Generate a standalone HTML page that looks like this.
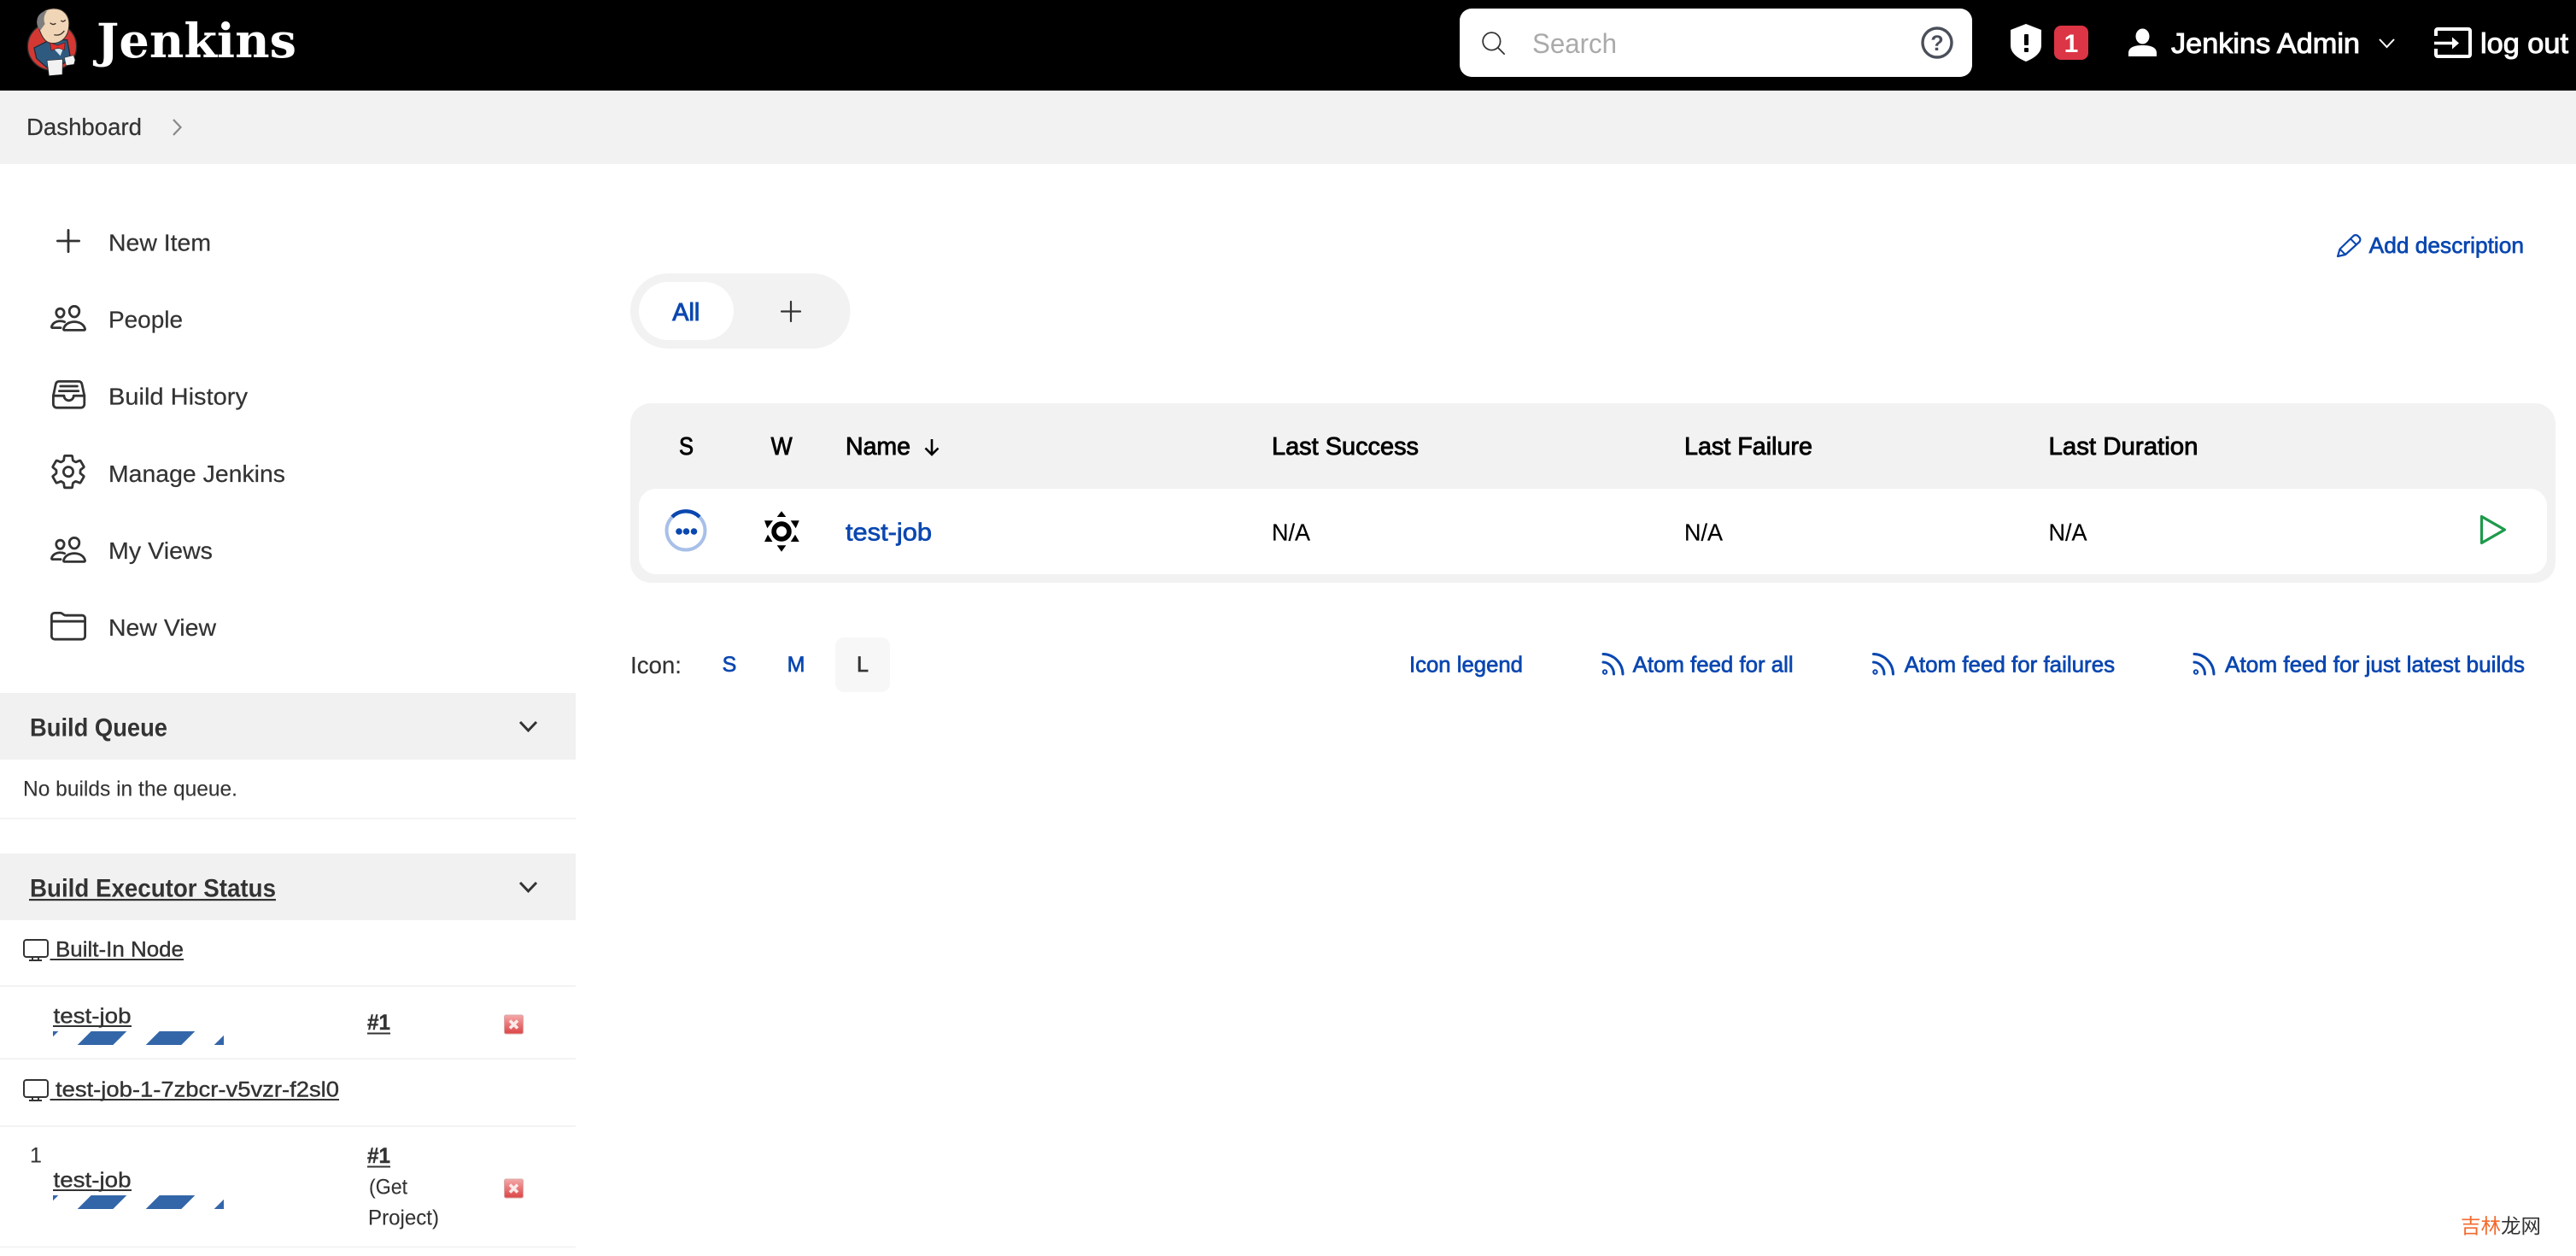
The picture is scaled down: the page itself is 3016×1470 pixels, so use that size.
<!DOCTYPE html>
<html lang="en">
<head>
<meta charset="utf-8">
<title>Dashboard [Jenkins]</title>
<style>
html,body{margin:0;padding:0;background:#fff;width:3016px;height:1470px;overflow:hidden}
svg{display:block}
text{font-family:"Liberation Sans",sans-serif;white-space:pre}
.sb{font-size:28px;fill:#333;stroke:#333;stroke-width:.2px}
.sm{font-size:25px;fill:#333;stroke:#333;stroke-width:.1px}
.smm{font-size:25px;fill:#333;stroke:#333;stroke-width:.4px}
.hd{font-size:29px;fill:#000;stroke:#000;stroke-width:.9px}
.td{font-size:28px;fill:#000;stroke:#000;stroke-width:.2px}
.lk{fill:#0a47b0;stroke:#0a47b0;stroke-width:.7px;font-size:26px}
.ion{fill:none;stroke:#333;stroke-width:32;stroke-linecap:round;stroke-linejoin:round}
.ul{stroke:#333;stroke-width:2}
.sep{fill:#f3f3f3}
</style>
</head>
<body>
<svg xmlns="http://www.w3.org/2000/svg" width="3016" height="1470" viewBox="0 0 3016 1470">
<defs>
<linearGradient id="stopg" x1="0" y1="0" x2="0" y2="1"><stop offset="0" stop-color="#f4a8a8"/><stop offset="1" stop-color="#dc4446"/></linearGradient>
<clipPath id="barclip"><rect x="62" y="0" width="200" height="16"/></clipPath>
<g id="bar" clip-path="url(#barclip)" fill="#3366a8">
<polygon points="26.7,0 68.3,0 52.3,16 10.7,16"/>
<polygon points="106.7,0 148.3,0 132.3,16 90.7,16"/>
<polygon points="186.7,0 228.3,0 212.3,16 170.7,16"/>
<polygon points="266.7,0 308.3,0 292.3,16 250.7,16"/>
</g>
<g id="stop">
<rect x="0.5" y="0.5" width="22" height="22" rx="2" fill="url(#stopg)" stroke="#dba8a8"/>
<path d="M7 7L16 16M16 7L7 16" stroke="#fbeaea" stroke-width="3.6"/>
</g>
<g id="mon" fill="none" stroke="#333" stroke-width="2">
<rect x="28" y="1" width="28" height="20" rx="3"/>
<path d="M38 21v3M45 21v3M34 25h15"/>
</g>
<g id="rss" fill="none" stroke="#0a47b0" stroke-width="3" stroke-linecap="round">
<circle cx="3.5" cy="22.5" r="2.2" stroke-width="2"/>
<path d="M1.5 11A13 14 0 0 1 14 25"/>
<path d="M1.5 1.5A23.5 24 0 0 1 24.5 25"/>
</g>
<g id="people">
<path class="ion" d="M402 168c-2.93 40.67-33.1 72-66 72s-63.12-31.32-66-72c-3-42.31 26.37-72 66-72s69 30.46 66 72z"/>
<path class="ion" d="M336 304c-65.17 0-127.84 32.37-143.54 95.41-2.08 8.34 3.15 16.59 11.72 16.59h263.65c8.57 0 13.77-8.25 11.72-16.59C463.85 335.36 401.18 304 336 304z"/>
<path class="ion" d="M200 185.94c-2.34 32.48-26.72 58.06-53 58.06s-50.7-25.57-53-58.06C91.61 152.15 115.34 128 147 128s55.39 24.77 53 57.94z"/>
<path class="ion" d="M206 306c-18.05-8.27-37.93-11.45-59-11.45-52 0-102.1 25.85-114.65 76.2-1.65 6.66 2.53 13.25 9.37 13.25H154"/>
</g>
</defs>

<!-- header -->
<rect width="3016" height="106" fill="#000"/>
<g transform="scale(.3333)">
<ellipse cx="183" cy="163" rx="86" ry="84" fill="#d33833" stroke="#2a2a2a" stroke-width="4"/>
<path d="M120 168L176 140H236L246 195L225 222L170 242L128 205Z" fill="#2f5a80" stroke="#1f2d3a" stroke-width="4"/>
<path d="M134 92C124 62 148 32 186 30C224 28 246 56 242 92C240 128 218 152 184 152C156 152 144 122 134 92Z" fill="#f0d6b7" stroke="#3a3028" stroke-width="3"/>
<path d="M130 72C132 52 146 42 166 38C154 52 152 70 158 84L142 106C132 98 128 84 130 72Z" fill="#7f7f7f"/>
<path d="M176 80Q186 90 196 82M214 72Q222 80 230 70M190 122Q212 128 226 108" fill="none" stroke="#3a3028" stroke-width="4"/>
<path d="M190 172L212 196L222 170Z" fill="#d8e6ee"/>
<path d="M176 150L202 160L228 150L226 176L203 168L180 178Z" fill="#e0302c" stroke="#5a1a18" stroke-width="2"/>
<path d="M165 212L220 208L219 262L172 266Z" fill="#f2f2f2" stroke="#222" stroke-width="2"/>
<path d="M226 202L258 194L264 210L260 226L232 230Z" fill="#f2f2f2" stroke="#333" stroke-width="2"/>
</g>
<text x="113" y="67" font-size="55" font-weight="700" fill="#fff" textLength="234" lengthAdjust="spacingAndGlyphs" style="font-family:'DejaVu Serif',serif">Jenkins</text>

<rect x="1709" y="10" width="600" height="80" rx="14" fill="#fff"/>
<g transform="translate(1732 34) scale(.065)" fill="none" stroke="#333" stroke-width="27" stroke-linecap="round" stroke-miterlimit="10">
<path d="M221.09 64a157.09 157.09 0 10157.09 157.09A157.1 157.1 0 00221.09 64z"/><path d="M338.29 338.29L448 448"/>
</g>
<text x="1794" y="62" font-size="32" fill="#aaa" textLength="99" lengthAdjust="spacingAndGlyphs">Search</text>
<circle cx="2268" cy="50" r="17" fill="none" stroke="#4a4f5a" stroke-width="3.4"/>
<text x="2268" y="59" font-size="25" font-weight="700" fill="#4a4f5a" text-anchor="middle">?</text>

<path d="M2372 28L2390 35V53C2390 62 2382 68 2372 72C2362 68 2354 62 2354 53V35Z" fill="#fff"/>
<rect x="2370" y="40" width="5" height="13" rx="1" fill="#000"/>
<rect x="2370" y="56" width="5" height="5" rx="1" fill="#000"/>
<rect x="2405" y="30" width="40" height="40" rx="8" fill="#dc3545"/>
<text x="2425" y="61" font-size="30" font-weight="700" fill="#fff" text-anchor="middle">1</text>

<ellipse cx="2508.5" cy="42.5" rx="8" ry="9" fill="#fff"/>
<path d="M2492 66V62C2492 55 2500 53 2508.5 53S2525 55 2525 62V66Z" fill="#fff"/>
<text x="2542" y="62" font-size="33" fill="#fff" stroke="#fff" stroke-width="1" textLength="221" lengthAdjust="spacingAndGlyphs">Jenkins Admin</text>
<path d="M2786 46L2794.5 55L2803 46" fill="none" stroke="#fff" stroke-width="2"/>
<path d="M2852 42V36A2 2 0 0 1 2854 34H2890A2 2 0 0 1 2892 36V64A2 2 0 0 1 2890 66H2854A2 2 0 0 1 2852 64V57" fill="none" stroke="#fff" stroke-width="4"/>
<path d="M2850 50.500H2873" fill="none" stroke="#fff" stroke-width="3.5"/>
<path d="M2871 43.500L2879 50.500L2871 57.500Z" fill="#fff"/>
<text x="2904" y="62" font-size="33" fill="#fff" stroke="#fff" stroke-width="1" textLength="103" lengthAdjust="spacingAndGlyphs">log out</text>

<!-- breadcrumb -->
<rect y="106" width="3016" height="86" fill="#f2f2f2"/>
<text x="31" y="158" class="sb" textLength="135" lengthAdjust="spacingAndGlyphs">Dashboard</text>
<path d="M203 140L211.500 149L203 158" fill="none" stroke="#888" stroke-width="2.200"/>

<!-- side tasks -->
<g transform="translate(57.6 259.6) scale(.0875)"><path class="ion" d="M256 112v288M400 256H112"/></g>
<text x="127" y="293.5" class="sb" textLength="120" lengthAdjust="spacingAndGlyphs">New Item</text>
<use href="#people" transform="translate(57.6 350) scale(.0875)"/>
<text x="127" y="383.5" class="sb" textLength="87" lengthAdjust="spacingAndGlyphs">People</text>
<g transform="translate(58.2 439.4) scale(.0875)"><path class="ion" d="M384 80H128c-26 0-43 14-48 40L48 272v112a48.14 48.14 0 0048 48h320a48.14 48.14 0 0048-48V272l-32-152c-5-27-23-40-48-40z"/><path class="ion" d="M48 272h144M320 272h144M192 272a64 64 0 00128 0M144 144h224M128 208h256"/></g>
<text x="127" y="473.5" class="sb" textLength="163" lengthAdjust="spacingAndGlyphs">Build History</text>
<g transform="translate(57.6 529.7) scale(.0875)"><path class="ion" d="M262.29 192.31a64 64 0 1057.4 57.4 64.13 64.13 0 00-57.4-57.4zM416.39 256a154.34 154.34 0 01-1.53 20.79l45.21 35.46a10.81 10.81 0 012.45 13.75l-42.77 74a10.81 10.81 0 01-13.14 4.59l-44.9-18.08a16.11 16.11 0 00-15.17 1.75A164.48 164.48 0 01325 400.8a15.94 15.94 0 00-8.82 12.14l-6.73 47.89a11.08 11.08 0 01-10.68 9.17h-85.54a11.11 11.11 0 01-10.69-8.87l-6.72-47.82a16.07 16.07 0 00-9-12.22 155.3 155.3 0 01-21.46-12.57 16 16 0 00-15.11-1.71l-44.89 18.07a10.81 10.81 0 01-13.14-4.58l-42.77-74a10.8 10.8 0 012.45-13.75l38.21-30a16.05 16.05 0 006-14.08c-.36-4.17-.58-8.33-.58-12.5s.21-8.27.58-12.35a16 16 0 00-6.07-13.94l-38.19-30A10.81 10.81 0 0149.48 186l42.77-74a10.81 10.81 0 0113.14-4.59l44.9 18.08a16.11 16.11 0 0015.17-1.75A164.48 164.48 0 01187 111.2a15.94 15.94 0 008.82-12.14l6.73-47.89A11.08 11.08 0 01213.23 42h85.54a11.11 11.11 0 0110.69 8.87l6.72 47.82a16.07 16.07 0 009 12.22 155.3 155.3 0 0121.46 12.57 16 16 0 0015.11 1.71l44.89-18.07a10.81 10.81 0 0113.14 4.58l42.77 74a10.8 10.8 0 01-2.45 13.75l-38.21 30a16.05 16.05 0 00-6.07 14.08c.33 4.14.55 8.3.55 12.47z"/></g>
<text x="127" y="564" class="sb" textLength="207" lengthAdjust="spacingAndGlyphs">Manage Jenkins</text>
<use href="#people" transform="translate(57.6 621) scale(.0875)"/>
<text x="127" y="654" class="sb" textLength="122" lengthAdjust="spacingAndGlyphs">My Views</text>
<g transform="translate(57.6 710.4) scale(.0875)"><path class="ion" d="M440 432H72a40 40 0 01-40-40V120a40 40 0 0140-40h75.89a40 40 0 0122.19 6.72l27.84 18.56a40 40 0 0022.19 6.72H440a40 40 0 0140 40v240a40 40 0 01-40 40z"/><path class="ion" d="M32 192h448"/></g>
<text x="127" y="744" class="sb" textLength="126" lengthAdjust="spacingAndGlyphs">New View</text>

<!-- build queue -->
<rect y="811" width="674" height="78" fill="#f1f1f1"/>
<text x="35" y="861.500" font-size="29.5" font-weight="700" fill="#333" textLength="161" lengthAdjust="spacingAndGlyphs">Build Queue</text>
<path d="M609 845L618.500 855L628 845" fill="none" stroke="#333" stroke-width="3"/>
<text x="27" y="931.500" class="sm" textLength="251" lengthAdjust="spacingAndGlyphs">No builds in the queue.</text>
<rect y="957" width="674" height="2" class="sep"/>

<!-- executors -->
<rect y="999" width="674" height="78" fill="#f1f1f1"/>
<text x="35" y="1049.500" font-size="29.5" font-weight="700" fill="#333" textLength="288" lengthAdjust="spacingAndGlyphs">Build Executor Status</text>
<rect x="34" y="1052" width="289" height="2.200" fill="#333"/>
<path d="M609 1033L618.500 1043L628 1033" fill="none" stroke="#333" stroke-width="3"/>

<use href="#mon" transform="translate(0 1099)"/>
<text x="65" y="1119.500" class="smm" textLength="150" lengthAdjust="spacingAndGlyphs">Built-In Node</text>
<path d="M58.500 1123H215" class="ul"/>
<rect y="1153" width="674" height="2" class="sep"/>

<text x="62.500" y="1197.500" class="smm" textLength="91" lengthAdjust="spacingAndGlyphs">test-job</text>
<path d="M62 1201H154" class="ul"/>
<use href="#bar" transform="translate(0 1207)"/>
<text x="430" y="1205" class="smm" font-weight="700" textLength="27" lengthAdjust="spacingAndGlyphs">#1</text>
<path d="M430 1209.500H457" class="ul"/>
<use href="#stop" transform="translate(590 1187.500)"/>
<rect y="1238" width="674" height="2" class="sep"/>

<use href="#mon" transform="translate(0 1263)"/>
<text x="65" y="1283.500" class="smm" textLength="332" lengthAdjust="spacingAndGlyphs">test-job-1-7zbcr-v5vzr-f2sl0</text>
<path d="M58.500 1287H397" class="ul"/>
<rect y="1317" width="674" height="2" class="sep"/>

<text x="35" y="1360.500" font-size="25" fill="#333" stroke="#333" stroke-width=".1">1</text>
<text x="62.500" y="1389.500" class="smm" textLength="91" lengthAdjust="spacingAndGlyphs">test-job</text>
<path d="M62 1393H154" class="ul"/>
<use href="#bar" transform="translate(0 1399)"/>
<text x="430" y="1361" class="smm" font-weight="700" textLength="27" lengthAdjust="spacingAndGlyphs">#1</text>
<path d="M430 1365.500H457" class="ul"/>
<text x="432" y="1397.500" class="sm" textLength="45" lengthAdjust="spacingAndGlyphs">(Get</text>
<text x="431" y="1433.500" class="sm" textLength="83" lengthAdjust="spacingAndGlyphs">Project)</text>
<use href="#stop" transform="translate(590 1379.500)"/>
<rect y="1458.500" width="674" height="2" class="sep"/>

<!-- add description -->
<path d="M2737 300L2739.500 291.500L2755 276.500A4 4 0 0 1 2761 276.500L2762 277.500A4 4 0 0 1 2762 283.500L2746 298Z" fill="none" stroke="#0a47b0" stroke-width="2.200" stroke-linejoin="round"/>
<path d="M2752 279.500L2759 286.500M2739.500 291.500L2746 298" fill="none" stroke="#0a47b0" stroke-width="2"/>
<text x="2773.700" y="296" class="lk" textLength="181.300" lengthAdjust="spacingAndGlyphs">Add description</text>

<!-- tabs -->
<rect x="738" y="320" width="257.500" height="88" rx="44" fill="#f2f2f2"/>
<rect x="748" y="330" width="111" height="68" rx="34" fill="#fff"/>
<text x="787.300" y="375" font-size="29" fill="#0a47b0" stroke="#0a47b0" stroke-width="1" textLength="32" lengthAdjust="spacingAndGlyphs">All</text>
<path d="M926 353V376M915 364.500H937" fill="none" stroke="#333" stroke-width="2.200" stroke-linecap="round"/>

<!-- table -->
<rect x="738" y="472" width="2254" height="210" rx="24" fill="#f2f2f2"/>
<rect x="748" y="572" width="2234" height="100" rx="20" fill="#fff"/>
<text x="795" y="532" class="hd" textLength="17" lengthAdjust="spacingAndGlyphs">S</text>
<text x="902.600" y="532" class="hd" textLength="25" lengthAdjust="spacingAndGlyphs">W</text>
<text x="990" y="532" class="hd" textLength="76" lengthAdjust="spacingAndGlyphs">Name</text>
<path d="M1091 514V532M1083.500 524.500L1091 532L1098.500 524.500" fill="none" stroke="#000" stroke-width="2.600"/>
<text x="1489" y="532" class="hd" textLength="172" lengthAdjust="spacingAndGlyphs">Last Success</text>
<text x="1972" y="532" class="hd" textLength="150" lengthAdjust="spacingAndGlyphs">Last Failure</text>
<text x="2398.500" y="532" class="hd" textLength="175" lengthAdjust="spacingAndGlyphs">Last Duration</text>

<circle cx="803" cy="621" r="22.500" fill="none" stroke="#a8c0e8" stroke-width="4"/>
<path d="M787 605A22.500 22.500 0 0 1 819 605" fill="none" stroke="#0a47b0" stroke-width="4.400"/>
<circle cx="795" cy="622" r="3.800" fill="#0a47b0"/><circle cx="803.500" cy="622" r="3.800" fill="#0a47b0"/><circle cx="812.500" cy="622" r="3.800" fill="#0a47b0"/>

<circle cx="915" cy="622" r="8.900" fill="none" stroke="#000" stroke-width="5.700"/>
<g fill="#000">
<path d="M915 598.300L920.300 605H909.700Z"/>
<path d="M915 645.700L920.300 638.300H909.700Z"/>
<path d="M895 609.300H905L898.300 618.300Z"/>
<path d="M935.700 609.300H925.700L931.700 618.300Z"/>
<path d="M895 634H904.500L899 625.700Z"/>
<path d="M935.700 634H925.700L931 625.700Z"/>
</g>

<text x="990" y="632.500" class="lk" style="font-size:28.500px" textLength="101" lengthAdjust="spacingAndGlyphs">test-job</text>
<text x="1489" y="632.500" class="td" textLength="45" lengthAdjust="spacingAndGlyphs">N/A</text>
<text x="1972" y="632.500" class="td" textLength="45" lengthAdjust="spacingAndGlyphs">N/A</text>
<text x="2398.500" y="632.500" class="td" textLength="45" lengthAdjust="spacingAndGlyphs">N/A</text>
<path d="M2905.500 604.500L2932.500 620L2905.500 635.500Z" fill="none" stroke="#1e9a4c" stroke-width="3.200" stroke-linejoin="round"/>

<!-- icon size + feeds -->
<text x="738" y="788" class="sb" textLength="60" lengthAdjust="spacingAndGlyphs">Icon:</text>
<text x="854" y="786" class="lk" font-size="25" style="font-size:25px" text-anchor="middle">S</text>
<text x="932" y="786" class="lk" style="font-size:25px" text-anchor="middle">M</text>
<rect x="978" y="746" width="64" height="64" rx="10" fill="#f7f7f7"/>
<text x="1010" y="786" font-size="25" fill="#333" stroke="#333" stroke-width=".7" text-anchor="middle">L</text>

<text x="1650" y="786.500" class="lk" textLength="133" lengthAdjust="spacingAndGlyphs">Icon legend</text>
<use href="#rss" transform="translate(1875.500 764)"/>
<text x="1911.600" y="786.500" class="lk" textLength="188" lengthAdjust="spacingAndGlyphs">Atom feed for all</text>
<use href="#rss" transform="translate(2192 764)"/>
<text x="2229.600" y="786.500" class="lk" textLength="246.500" lengthAdjust="spacingAndGlyphs">Atom feed for failures</text>
<use href="#rss" transform="translate(2567.500 764)"/>
<text x="2605" y="786.500" class="lk" textLength="351" lengthAdjust="spacingAndGlyphs">Atom feed for just latest builds</text>

<!-- watermark -->
<text x="2881" y="1443" font-size="23.500" style="font-family:'Liberation Sans','Noto Sans CJK SC',sans-serif"><tspan fill="#f26a2e">吉林</tspan><tspan fill="#333">龙网</tspan></text>
</svg>
</body>
</html>
